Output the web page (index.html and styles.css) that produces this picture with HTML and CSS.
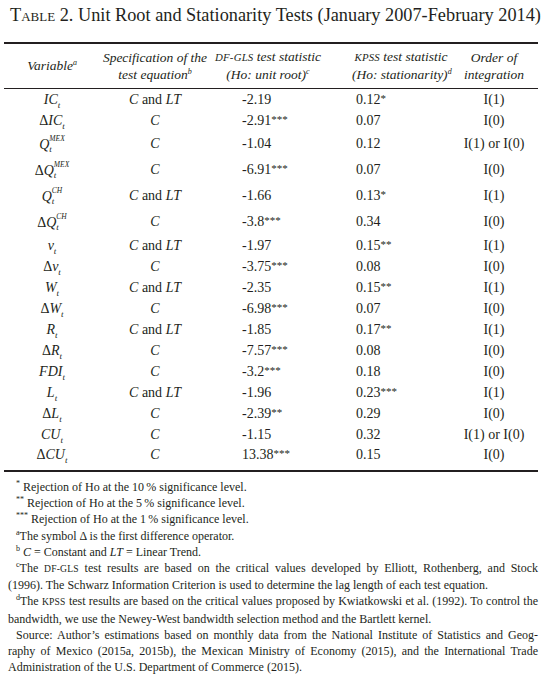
FILE: index.html
```html
<!DOCTYPE html>
<html lang="en">
  <head>
    <meta charset="UTF-8" />
    <meta name="viewport" content="width=device-width, initial-scale=1.0" />
    <title>Table 2</title>
    <link rel="stylesheet" href="styles.css">
  </head>
  <body>
    <div class="page">
      <h1 class="title"><span class="sc">Table</span> 2. Unit Root and Stationarity Tests (January 2007-February 2014)</h1>

      <table class="stats">
        <colgroup>
          <col class="colVar" />
          <col class="colSpec" />
          <col class="colDf" />
          <col class="colKpss" />
          <col class="colOrder" />
        </colgroup>
        <thead>
          <tr>
            <th>Variable<sup class="mark">a</sup></th>
            <th>Specification of the<br />test equation<sup class="mark">b</sup></th>
            <th class="thDf"><span class="caps">DF-GLS</span> test statistic<br />(Ho: unit root)<sup class="mark">c</sup></th>
            <th class="thKpss"><span class="caps">KPSS</span> test statistic<br />(Ho: stationarity)<sup class="mark">d</sup></th>
            <th>Order of<br />integration</th>
          </tr>
        </thead>
        <tbody>
          <tr>
            <td><i>IC</i><sub class="t">t</sub></td>
            <td><i>C</i> and <i>LT</i></td>
            <td class="num">-2.19</td>
            <td class="num">0.12<span class="star">*</span></td>
            <td>I(1)</td>
          </tr>
          <tr>
            <td>&Delta;<i>IC</i><sub class="t">t</sub></td>
            <td><i>C</i></td>
            <td class="num">-2.91<span class="star">***</span></td>
            <td class="num">0.07</td>
            <td>I(0)</td>
          </tr>
          <tr class="tall">
            <td><i>Q</i><span class="stack"><span class="up">MEX</span><span class="down">t</span></span></td>
            <td><i>C</i></td>
            <td class="num">-1.04</td>
            <td class="num">0.12</td>
            <td>I(1) or I(0)</td>
          </tr>
          <tr class="tall">
            <td>&Delta;<i>Q</i><span class="stack"><span class="up">MEX</span><span class="down">t</span></span></td>
            <td><i>C</i></td>
            <td class="num">-6.91<span class="star">***</span></td>
            <td class="num">0.07</td>
            <td>I(0)</td>
          </tr>
          <tr class="tall">
            <td><i>Q</i><span class="stack"><span class="up">CH</span><span class="down">t</span></span></td>
            <td><i>C</i> and <i>LT</i></td>
            <td class="num">-1.66</td>
            <td class="num">0.13<span class="star">*</span></td>
            <td>I(1)</td>
          </tr>
          <tr class="tall">
            <td>&Delta;<i>Q</i><span class="stack"><span class="up">CH</span><span class="down">t</span></span></td>
            <td><i>C</i></td>
            <td class="num">-3.8<span class="star">***</span></td>
            <td class="num">0.34</td>
            <td>I(0)</td>
          </tr>
          <tr>
            <td><i>v</i><sub class="t">t</sub></td>
            <td><i>C</i> and <i>LT</i></td>
            <td class="num">-1.97</td>
            <td class="num">0.15<span class="star">**</span></td>
            <td>I(1)</td>
          </tr>
          <tr>
            <td>&Delta;<i>v</i><sub class="t">t</sub></td>
            <td><i>C</i></td>
            <td class="num">-3.75<span class="star">***</span></td>
            <td class="num">0.08</td>
            <td>I(0)</td>
          </tr>
          <tr>
            <td><i>W</i><sub class="t">t</sub></td>
            <td><i>C</i> and <i>LT</i></td>
            <td class="num">-2.35</td>
            <td class="num">0.15<span class="star">**</span></td>
            <td>I(1)</td>
          </tr>
          <tr>
            <td>&Delta;<i>W</i><sub class="t">t</sub></td>
            <td><i>C</i></td>
            <td class="num">-6.98<span class="star">***</span></td>
            <td class="num">0.07</td>
            <td>I(0)</td>
          </tr>
          <tr>
            <td><i>R</i><sub class="t">t</sub></td>
            <td><i>C</i> and <i>LT</i></td>
            <td class="num">-1.85</td>
            <td class="num">0.17<span class="star">**</span></td>
            <td>I(1)</td>
          </tr>
          <tr>
            <td>&Delta;<i>R</i><sub class="t">t</sub></td>
            <td><i>C</i></td>
            <td class="num">-7.57<span class="star">***</span></td>
            <td class="num">0.08</td>
            <td>I(0)</td>
          </tr>
          <tr>
            <td><i>FDI</i><sub class="t">t</sub></td>
            <td><i>C</i></td>
            <td class="num">-3.2<span class="star">***</span></td>
            <td class="num">0.18</td>
            <td>I(0)</td>
          </tr>
          <tr>
            <td><i>L</i><sub class="t">t</sub></td>
            <td><i>C</i> and <i>LT</i></td>
            <td class="num">-1.96</td>
            <td class="num">0.23<span class="star">***</span></td>
            <td>I(1)</td>
          </tr>
          <tr>
            <td>&Delta;<i>L</i><sub class="t">t</sub></td>
            <td><i>C</i></td>
            <td class="num">-2.39<span class="star">**</span></td>
            <td class="num">0.29</td>
            <td>I(0)</td>
          </tr>
          <tr>
            <td><i>CU</i><sub class="t">t</sub></td>
            <td><i>C</i></td>
            <td class="num">-1.15</td>
            <td class="num">0.32</td>
            <td>I(1) or I(0)</td>
          </tr>
          <tr class="last">
            <td>&Delta;<i>CU</i><sub class="t">t</sub></td>
            <td><i>C</i></td>
            <td class="num">13.38<span class="star">***</span></td>
            <td class="num">0.15</td>
            <td>I(0)</td>
          </tr>
        </tbody>
      </table>

      <div class="notes">
        <p class="note"><span class="line"><sup class="fn">*</sup> Rejection of Ho at the 10&#8201;% significance level.</span></p>
        <p class="note"><span class="line"><sup class="fn">**</sup> Rejection of Ho at the 5&#8201;% significance level.</span></p>
        <p class="note"><span class="line"><sup class="fn">***</sup> Rejection of Ho at the 1&#8201;% significance level.</span></p>
        <p class="note"><span class="line"><sup class="fn">a</sup>The symbol &Delta; is the first difference operator.</span></p>
        <p class="note"><span class="line"><sup class="fn">b</sup> <i>C</i> = Constant and <i>LT</i> = Linear Trend.</span></p>
        <p class="note">
          <span class="line full"><sup class="fn">c</sup>The <span class="caps">DF-GLS</span> test results are based on the critical values developed by Elliott, Rothenberg, and Stock</span>
          <span class="line">(1996). The Schwarz Information Criterion is used to determine the lag length of each test equation.</span>
        </p>
        <p class="note">
          <span class="line full"><sup class="fn">d</sup>The <span class="caps">KPSS</span> test results are based on the critical values proposed by Kwiatkowski et al. (1992). To control the</span>
          <span class="line">bandwidth, we use the Newey-West bandwidth selection method and the Bartlett kernel.</span>
        </p>
        <p class="note">
          <span class="line full">Source: Author&rsquo;s estimations based on monthly data from the National Institute of Statistics and Geog-</span>
          <span class="line full">raphy of Mexico (2015a, 2015b), the Mexican Ministry of Economy (2015), and the International Trade</span>
          <span class="line">Administration of the U.S. Department of Commerce (2015).</span>
        </p>
      </div>
    </div>
  </body>
</html>
```

FILE: styles.css
```css
body {
  margin: 0;
  background-color: #ffffff;
  color: #231f20;
  font-family: "Liberation Serif", "Times New Roman", serif;
}

.page {
  width: 543px;
}

.sc {
  font-variant: small-caps;
}

.caps {
  font-size: 0.8em;
  letter-spacing: 0.2px;
}

.title {
  margin: 0;
  padding: 5px 0 0 10px;
  font-size: 18.3px;
  font-weight: normal;
  line-height: 20px;
  white-space: nowrap;
}

/* ---------- table ---------- */

.stats {
  width: 534px;
  margin: 17px 0 0 4px;
  border-collapse: collapse;
  table-layout: fixed;
  border-top: 2px solid #231f20;
  border-bottom: 2px solid #231f20;
  font-size: 14px;
}

.colVar { width: 96px; }
.colSpec { width: 110px; }
.colDf { width: 124px; }
.colKpss { width: 116px; }
.colOrder { width: 88px; }

.stats th {
  padding: 4px 0 5px 0;
  font-size: 13.5px;
  font-style: italic;
  font-weight: normal;
  line-height: 17px;
  white-space: nowrap;
  border-bottom: 1px solid #231f20;
}

.stats th.thDf {
  padding-right: 8px;
}

.stats th.thKpss {
  padding-left: 18px;
}

.stats td {
  height: 21px;
  padding: 0;
  line-height: 18px;
  text-align: center;
  white-space: nowrap;
}

.stats tr.tall td {
  height: 26px;
}

.stats tr.last td {
  height: 24px;
  vertical-align: top;
  padding-top: 1px;
}

.stats td.num {
  text-align: left;
  padding-left: 32px;
}

.stats td.num + td.num {
  padding-left: 22px;
}

.mark {
  font-size: 8px;
  line-height: 0;
}

.t {
  font-size: 9px;
  font-style: italic;
  line-height: 0;
}

.star {
  font-size: 11px;
  position: relative;
  top: -2px;
}

.stack {
  display: inline-block;
  vertical-align: -3px;
  font-style: italic;
  line-height: 10px;
  text-align: left;
}

.stack .up {
  display: block;
  font-size: 7.5px;
}

.stack .down {
  display: block;
  font-size: 9px;
}

/* ---------- notes ---------- */

.notes {
  padding: 7px 5px 0 8px;
}

.note {
  margin: 0;
  font-size: 12px;
  line-height: 16.2px;
}

.note .line {
  display: block;
  white-space: nowrap;
}

.note .line:first-child {
  text-indent: 8px;
}

.note .line.full {
  text-align: justify;
  text-align-last: justify;
}

.fn {
  font-size: 8px;
  line-height: 0;
}
```
